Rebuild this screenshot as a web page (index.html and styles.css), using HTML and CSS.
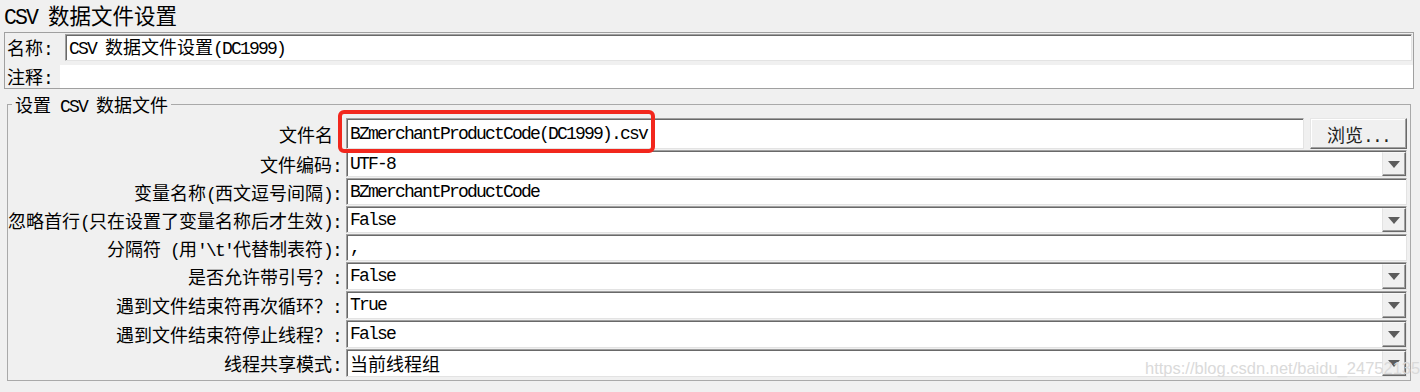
FILE: index.html
```html
<!DOCTYPE html>
<html lang="zh-CN">
<head>
<meta charset="utf-8">
<title>CSV 数据文件设置</title>
<link rel="stylesheet" href="styles.css">
</head>
<body>
<div class="title"><span class="e">CSV </span>数据文件设置</div>

<div class="namepanel">
  <div class="nrow">
    <div class="nlabel">名称<span class="e">:</span></div>
    <div class="tf name-tf"><span><span class="e">CSV </span>数据文件设置<span class="e">(DC1999)</span></span></div>
  </div>
  <div class="crow">
    <div class="clabel">注释<span class="e">:</span></div>
    <div class="comment"></div>
  </div>
</div>

<fieldset class="csv">
  <legend>设置<span class="e"> CSV </span>数据文件</legend>
  <div class="form">
    <div class="lbl nocolon"><span>文件名</span></div>
    <div class="filerow">
      <div class="tf"><span class="e">BZmerchantProductCode(DC1999).csv</span></div>
      <div class="btn"><span>浏览<span class="e">...</span></span></div>
      <div class="mark"></div>
    </div>

    <div class="lbl"><span>文件编码<span class="e">:</span></span></div>
    <div class="combo"><div class="val"><span class="e">UTF-8</span></div><div class="arrow"></div></div>

    <div class="lbl"><span>变量名称<span class="e">(</span>西文逗号间隔<span class="e">):</span></span></div>
    <div class="tf"><span class="e">BZmerchantProductCode</span></div>

    <div class="lbl"><span>忽略首行<span class="e">(</span>只在设置了变量名称后才生效<span class="e">):</span></span></div>
    <div class="combo"><div class="val"><span class="e">False</span></div><div class="arrow"></div></div>

    <div class="lbl"><span>分隔符<span class="e"> (</span>用<span class="e">'\t'</span>代替制表符<span class="e">):</span></span></div>
    <div class="tf"><span class="e">,</span></div>

    <div class="lbl"><span>是否允许带引号？<span class="e">:</span></span></div>
    <div class="combo"><div class="val"><span class="e">False</span></div><div class="arrow"></div></div>

    <div class="lbl"><span>遇到文件结束符再次循环？<span class="e">:</span></span></div>
    <div class="combo"><div class="val"><span class="e">True</span></div><div class="arrow"></div></div>

    <div class="lbl"><span>遇到文件结束符停止线程？<span class="e">:</span></span></div>
    <div class="combo"><div class="val"><span class="e">False</span></div><div class="arrow"></div></div>

    <div class="lbl"><span>线程共享模式<span class="e">:</span></span></div>
    <div class="combo"><div class="val"><span>当前线程组</span></div><div class="arrow"></div></div>
  </div>
</fieldset>

<div class="wm">https://blog.csdn.net/baidu_24752135</div>
</body>
</html>
```

FILE: styles.css
```css
* { box-sizing: border-box; }

html, body { margin: 0; padding: 0; }

body {
  width: 1420px;
  height: 392px;
  overflow: hidden;
  position: relative;
  background: #f0f0f0;
  font-family: "Noto Sans CJK SC", sans-serif;
  font-size: 18px;
  color: #000;
}

.e {
  font-family: "Liberation Mono", "Noto Sans CJK SC", monospace;
  letter-spacing: -1.8px;
}

.title {
  height: 32px;
  line-height: 30px;
  padding-left: 4px;
  font-size: 21.5px;
  white-space: nowrap;
}
.title .e { letter-spacing: -1.9px; }

/* name / comment panel */
.namepanel {
  margin: 0 6px 0 4px;
  border: 1px solid #a0a0a0;
  padding-top: 1px;
}
.nrow { display: flex; height: 27px; }
.nlabel { width: 60px; padding-left: 2px; line-height: 27px; white-space: nowrap; }
.name-tf { flex: 1; margin-right: 1px; }
.crow { display: flex; height: 23px; margin-top: 4px; }
.clabel { width: 55px; padding-left: 2px; line-height: 23px; white-space: nowrap; }
.comment { flex: 1; background: #fff; }

/* text field */
.tf {
  background: #fff;
  border: 1px solid;
  border-color: #a0a0a0 #e3e3e3 #e3e3e3 #a0a0a0;
  box-shadow: inset 1px 1px 0 #696969;
  padding-left: 3px;
  display: flex;
  align-items: center;
  white-space: pre;
  overflow: hidden;
  line-height: 20px;
}

/* fieldset */
.csv {
  margin: 6px 9px 0 7px;
  border: 1px solid #a9a9a9;
  padding: 5px 3px 3px 0;
  min-width: 0;
}
.csv legend {
  margin-left: 4px;
  padding: 0 3px;
  height: 18px;
  line-height: 18px;
  font-size: 18px;
  white-space: pre;
}

.form {
  display: grid;
  grid-template-columns: 338px 1fr;
  grid-template-rows: 31px repeat(4, 27px) repeat(4, 28px);
  row-gap: 1px;
}

.lbl {
  display: flex;
  align-items: center;
  justify-content: flex-end;
  padding-right: 5px;
  white-space: pre;
}
.lbl.nocolon { padding-right: 13px; }

.filerow {
  display: flex;
  gap: 6px;
  position: relative;
}
.filerow .tf { flex: 1; }

.btn {
  width: 97px;
  background: #f0f0f0;
  border: 1px solid;
  border-color: #e6e6e6 #696969 #696969 #e6e6e6;
  box-shadow: inset -1px -1px 0 #a0a0a0, inset 1px 1px 0 #ffffff;
  display: flex;
  align-items: center;
  justify-content: center;
  color: #222;
  white-space: nowrap;
}

/* red annotation around the file name */
.mark {
  position: absolute;
  left: -8px;
  top: -8px;
  width: 317px;
  height: 43px;
  border: 4px solid #f2271d;
  border-radius: 6px;
}

/* combo box */
.combo {
  display: flex;
  background: #fff;
  border: 1px solid;
  border-color: #a0a0a0 #e3e3e3 #e3e3e3 #a0a0a0;
  box-shadow: inset 1px 1px 0 #696969;
}
.combo .val {
  flex: 1;
  padding-left: 3px;
  display: flex;
  align-items: center;
  white-space: pre;
  line-height: 20px;
}
.arrow {
  width: 24px;
  margin-top: 1px;
  background: #f0f0f0;
  border-left: 1px solid #e3e3e3;
  border-top: 1px solid #f7f7f7;
  border-right: 1px solid #696969;
  border-bottom: 1px solid #696969;
  box-shadow: inset -1px -1px 0 #a0a0a0;
  display: flex;
  align-items: center;
  justify-content: center;
}
.arrow::after {
  content: "";
  border-left: 6px solid transparent;
  border-right: 6px solid transparent;
  border-top: 7px solid #5c5c5c;
}

/* watermark overlay */
.wm {
  position: absolute;
  left: 1145px;
  top: 359px;
  font-family: "Liberation Sans", sans-serif;
  font-size: 16.5px;
  color: #dadada;
  white-space: nowrap;
}
```
